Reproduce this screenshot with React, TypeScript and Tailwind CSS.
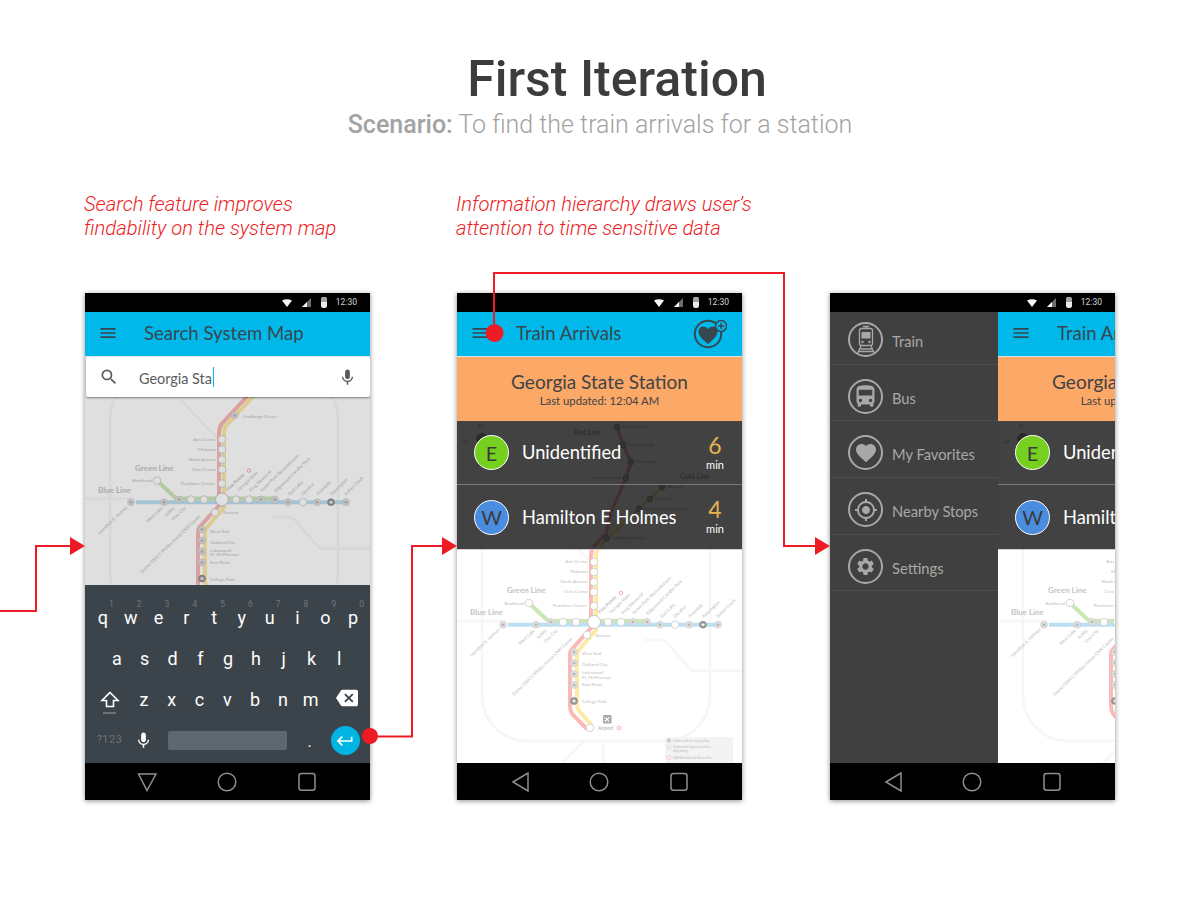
import type { ReactNode } from 'react';
import { MdBackspace, MdDirectionsBus, MdFavorite, MdKeyboardReturn, MdLocalAirport, MdMenu, MdMic, MdMyLocation, MdSearch, MdSettings } from 'react-icons/md';

const keyRow1 = [['q', '1'], ['w', '2'], ['e', '3'], ['r', '4'], ['t', '5'], ['y', '6'], ['u', '7'], ['i', '8'], ['o', '9'], ['p', '0']];
const keyRow2 = ['a', 's', 'd', 'f', 'g', 'h', 'j', 'k', 'l'];
const keyRow3 = ['z', 'x', 'c', 'v', 'b', 'n', 'm'];

function TrainIcon() {
  return (
    <svg width="20" height="30" viewBox="0 0 20 30" fill="none" stroke="currentColor" strokeWidth="1.300">
      <path d="M7 1.500H13M10 1.500V3.500" />
      <rect x="3.500" y="3.500" width="13" height="17" rx="2" />
      <rect x="5.500" y="7" width="9" height="6.500" fill="currentColor" stroke="none" />
      <circle cx="6.500" cy="17" r="1.200" fill="currentColor" stroke="none" />
      <circle cx="13.500" cy="17" r="1.200" fill="currentColor" stroke="none" />
      <path d="M5 21L1.500 28.500M15 21L18.500 28.500M3.500 24H16.500M2.500 26.500H17.500" />
    </svg>
  );
}

const drawerItems = [
  { label: 'Train', icon: <TrainIcon />, row: 'h-[53px] pt-[10px]' },
  { label: 'Bus', icon: <MdDirectionsBus size={27} />, row: 'h-[56px] pt-[14px]' },
  { label: 'My Favorites', icon: <MdFavorite size={24} />, row: 'h-[57px] pt-[14px]' },
  { label: 'Nearby Stops', icon: <MdMyLocation size={24} />, row: 'h-[57px] pt-[14px]' },
  { label: 'Settings', icon: <MdSettings size={21} />, row: 'h-[56px] pt-[14px]' },
];

// map coordinates are relative to Five Points
const stations: { x: number; y: number; parking?: boolean; dark?: boolean }[] = [
  { x: -91, y: 2.7, parking: true }, { x: -58, y: 2.7, parking: true }, { x: -43, y: 0, parking: true }, { x: -31, y: 0 }, { x: -18, y: 0 },
  { x: 14, y: 0 }, { x: 27, y: 0 }, { x: 39, y: 0, parking: true }, { x: 53, y: 0, parking: true }, { x: 66, y: 2.7, parking: true },
  { x: 81, y: 2.7 }, { x: 95, y: 2.7, parking: true }, { x: 109, y: 2.7, parking: true, dark: true }, { x: 124, y: 2.7, parking: true },
  { x: -65, y: -19 }, { x: 0, y: -16 }, { x: 0, y: -30 }, { x: 0, y: -40 }, { x: 0, y: -50 }, { x: 0, y: -60 }, { x: 12.7, y: -84, parking: true },
  { x: -7, y: 13 }, { x: -20, y: 30, parking: true }, { x: -20, y: 41, parking: true }, { x: -20, y: 52, parking: true }, { x: -20, y: 63, parking: true },
  { x: -20, y: 79, parking: true, dark: true }, { x: -4, y: 106 },
];

const sideLabels = [
  { text: 'Arts Center', x: -6, y: -59, end: true }, { text: 'Midtown', x: -6, y: -49, end: true }, { text: 'North Avenue', x: -6, y: -39, end: true },
  { text: 'Civic Center', x: -6, y: -29, end: true }, { text: 'Peachtree Center', x: -7, y: -15, end: true }, { text: 'Bankhead', x: -70, y: -17.500, end: true },
  { text: 'Lindbergh Center', x: 21, y: -82 }, { text: 'Garnett', x: 1, y: 14.500 }, { text: 'West End', x: -12, y: 33 }, { text: 'Oakland City', x: -12, y: 44 },
  { text: 'Lakewood/', x: -12, y: 52 }, { text: 'Ft. McPherson', x: -12, y: 56.500 }, { text: 'East Point', x: -12, y: 64 }, { text: 'College Park', x: -12, y: 81 },
];

const slantLabels = [
  { text: 'Hamilton E. Holmes', x: -94, y: 8, end: true }, { text: 'West Lake', x: -59, y: 9, end: true }, { text: 'Ashby', x: -47, y: 9, end: true }, { text: 'Vine City', x: -36, y: 9, end: true },
  { text: 'Dome/GWCC/Philips Arena/CNN Center', x: -21, y: 17, end: true },
  { text: 'Georgia State', x: 17, y: -8 }, { text: 'King Memorial', x: 29, y: -7.500 }, { text: 'Inman Park/Reynoldstown', x: 40, y: -7.500 }, { text: 'Edgewood/Candler Park', x: 54, y: -7 },
  { text: 'East Lake', x: 68, y: -4 }, { text: 'Decatur', x: 81, y: -4 }, { text: 'Avondale', x: 96, y: -4 }, { text: 'Kensington', x: 110, y: -4 }, { text: 'Indian Creek', x: 124, y: -4 },
];

const northStations = [[12.7, -84], [45, -113], [56, -123], [68, -135], [32, -144], [37, -160], [29, -177], [23, -195]];
const northLabels = [
  { text: 'North Springs', x: 28, y: -194 }, { text: 'Sandy Springs', x: 34, y: -176 }, { text: 'Dunwoody', x: 42, y: -159 }, { text: 'Medical Center', x: 27, y: -143, end: true },
  { text: 'Doraville', x: 73, y: -134 }, { text: 'Chamblee', x: 61, y: -122 }, { text: 'Brookhaven/Oglethorpe', x: 50, y: -112 }, { text: 'Lindbergh Center', x: 18, y: -83 },
];

function MetroMap({ viewBox, north }: { viewBox: string; north?: boolean }) {
  return (
    <svg viewBox={viewBox} className="absolute inset-0 h-full w-full font-['Lato',sans-serif]">
      <g fill="none" stroke="#f6f6f6" strokeWidth="2.500">
        <rect x="-112" y="-125" width="228" height="244" rx="45" />
        <path d="M-137 -1H-88M50 18H66Q72 18 76 24L95 46Q98 49 102 49H148M-32 141L-10 119M9 119V141M-42 -100L-5 -62" />
      </g>
      <g fill="none" strokeWidth="4">
        <path d="M-86 2.700H124" stroke="#bcdff3" />
        <path d="M-65 -19L-48 -3Q-46 -1 -43 -1H53" stroke="#cde6b6" />
        <path d="M25 -103L0 -76Q-3 -72 -3 -66V6L-22 27Q-24 29 -24 33V84Q-24 90 -20 94L-7 107" stroke="#fbb9b5" />
        <path d="M32 -104L6 -76Q2 -72 2 -66V8L-15 28Q-17 30 -17 34V82Q-17 87 -13 91L-2 104" stroke="#fdeaa4" />
      </g>
      {stations.map((s) => (
        <g key={`${s.x}:${s.y}`}>
          <circle cx={s.x} cy={s.y} r={s.parking ? 3.400 : 3.800} fill={s.dark ? '#9a9a9a' : s.parking ? '#e4e4e4' : '#ffffff'} stroke={s.dark ? '#8a8a8a' : '#cccccc'} strokeWidth="0.800" />
          {s.parking && <rect x={s.x - 1.500} y={s.y - 1.200} width="3" height="2.400" rx="0.600" fill={s.dark ? '#eeeeee' : '#b8b8b8'} />}
        </g>
      ))}
      <circle cx="0" cy="0" r="6.500" fill="#ffffff" stroke="#c4c4c4" strokeWidth="1" />
      <circle cx="27" cy="-29" r="1.800" fill="#ffffff" stroke="#f4a5a5" strokeWidth="0.900" />
      <circle cx="25" cy="106" r="1.800" fill="#ffffff" stroke="#f4a5a5" strokeWidth="0.900" />
      <g fill="#bcbcbc" fontSize="4.500">
        {sideLabels.map((l) => (
          <text key={l.text} x={l.x} y={l.y} textAnchor={l.end ? 'end' : 'start'}>{l.text}</text>
        ))}
        {slantLabels.map((l) => (
          <text key={l.text} x={l.x} y={l.y} textAnchor={l.end ? 'end' : 'start'} transform={`rotate(-44 ${l.x} ${l.y})`}>{l.text}</text>
        ))}
        <text x="6" y="-8" fontWeight="700" fontSize="4.800" transform="rotate(-44 6 -8)">Five Points</text>
        <text x="4" y="107.500" fontWeight="700" fontSize="4.800">Airport</text>
        <text x="-87" y="-29" fontWeight="700" fontSize="8" fill="#c4c4c4">Green Line</text>
        <text x="-124" y="-7" fontWeight="700" fontSize="8" fill="#c4c4c4">Blue Line</text>
      </g>
      <rect x="9" y="93" width="8.500" height="8.500" rx="1" fill="#a8a8a8" />
      <g transform="rotate(45 13.250 97.250)">
        <MdLocalAirport x={9.250} y={93.250} size={8} color="#ffffff" />
      </g>
      <g>
        <rect x="71" y="115" width="68" height="26" fill="#f3f3f3" />
        <circle cx="75" cy="118.500" r="1.800" fill="#cfcfcf" stroke="#b5b5b5" strokeWidth="0.400" />
        <circle cx="75" cy="125.500" r="1.600" fill="#ffffff" stroke="#b5b5b5" strokeWidth="0.500" />
        <circle cx="75" cy="135.500" r="1.800" fill="#ffffff" stroke="#f4a5a5" strokeWidth="0.700" />
        <g fill="#b9b9b9" fontSize="2.700">
          <text x="79" y="119.500">Stations with free daily parking</text>
          <text x="79" y="125.500">Stations with long-term and free</text>
          <text x="79" y="129.500">daily parking</text>
          <text x="79" y="136.500">MARTA Buckhead &amp; Breeze Pass</text>
        </g>
      </g>
      {north && (
        <g>
          <path d="M0 -76L12 -88L17 -110L32 -144L37 -160L29 -177L23 -195" fill="none" stroke="#e62a2a" strokeWidth="3" />
          <path d="M6 -76L68 -135" fill="none" stroke="#d9c200" strokeWidth="2.500" />
          {northStations.map(([x, y]) => (
            <circle key={`${x}:${y}`} cx={x} cy={y} r="3" fill="#555555" stroke="#111111" strokeWidth="0.800" />
          ))}
          <g fill="#222222" fontSize="4.200">
            {northLabels.map((l) => (
              <text key={l.text} x={l.x} y={l.y} textAnchor={l.end ? 'end' : 'start'}>{l.text}</text>
            ))}
            <text x="-20" y="-187" fontWeight="700" fontSize="7">Red Line</text>
            <text x="86" y="-143" fontWeight="700" fontSize="7">Gold Line</text>
            <text x="-116" y="-194" fontSize="6">N</text>
            <text x="-132" y="-178" fontSize="6">W</text>
          </g>
          <circle cx="-112" cy="-183" r="6" fill="#111111" />
        </g>
      )}
    </svg>
  );
}

function StatusBar() {
  return (
    <div className="flex h-[19px] items-center justify-end bg-black pr-[13px]">
      <svg width="10" height="8" viewBox="0 0 10 8"><path d="M0 1.500Q5 -1 10 1.500L5 8Z" fill="#f7f7f7" /></svg>
      <svg width="9" height="9" viewBox="0 0 9 9" className="ml-[10px]"><path d="M0 9L9 0V9Z" fill="#6d6d6d" /><path d="M0 9L5 4V9Z" fill="#f7f7f7" /></svg>
      <svg width="6" height="11" viewBox="0 0 6 11" className="ml-[10px]"><rect width="6" height="11" rx="2.500" fill="#ececec" /><path d="M0 5V2.500Q0 0 3 0Q6 0 6 2.500V5Z" fill="#a0a0a0" /></svg>
      <span className="ml-[9px] font-['Roboto',sans-serif] text-[8.500px] leading-none text-[#d6d6d6]">12:30</span>
    </div>
  );
}

function NavBar({ down }: { down?: boolean }) {
  return (
    <div className="flex h-[37px] items-center gap-[60px] bg-black pl-[52px]">
      <svg width="20" height="20" viewBox="0 0 20 20" fill="none" stroke="#8f8f8f" strokeWidth="1.500" className={down ? '' : 'ml-[2px] -mr-[2px]'}>
        {down ? <path d="M1.500 2H19L10 18.500Z" /> : <path d="M2 10L17 1V19Z" />}
      </svg>
      <svg width="20" height="20" viewBox="0 0 20 20" fill="none" stroke="#8f8f8f" strokeWidth="1.500"><circle cx="10" cy="10" r="8.800" /></svg>
      <svg width="20" height="20" viewBox="0 0 20 20" fill="none" stroke="#8f8f8f" strokeWidth="1.500"><rect x="2" y="1.600" width="16" height="16.600" rx="2.500" /></svg>
    </div>
  );
}

function Phone({ children, down }: { children: ReactNode; down?: boolean }) {
  return (
    <div className="flex h-[507px] w-[285px] shrink-0 flex-col overflow-hidden bg-white font-['Lato',sans-serif] shadow-[0_1px_5px_rgba(0,0,0,0.45)]">
      <StatusBar />
      <div className="h-[451px] overflow-hidden">{children}</div>
      <NavBar down={down} />
    </div>
  );
}

function AppBar({ title, action }: { title: string; action?: ReactNode }) {
  return (
    <div className="relative flex h-[45px] items-center border-b border-[#d8e8ee] bg-[#00b9ea] pb-[2px] text-[#37474f]">
      <MdMenu size={20} className="ml-[13px]" />
      <span className="ml-[26px] text-[18.600px] leading-none">{title}</span>
      {action}
    </div>
  );
}

function FavoriteAdd() {
  return (
    <div className="absolute left-[236px] top-[5px] h-[34px] w-[34px]">
      <svg viewBox="0 0 34 34" className="h-full w-full">
        <circle cx="15" cy="17" r="13.200" fill="none" stroke="#37474f" strokeWidth="2" />
        <path d="M15 27C9 22 5.500 18.500 5.500 14.500C5.500 11.500 7.800 9.500 10.300 9.500C12.300 9.500 14 10.500 15 12.200C16 10.500 17.700 9.500 19.700 9.500C22.200 9.500 24.500 11.500 24.500 14.500C24.500 18.500 21 22 15 27Z" fill="#37474f" />
        <circle cx="28" cy="9" r="5.500" fill="#00b9ea" stroke="#37474f" strokeWidth="1.500" />
        <path d="M28 6V12M25 9H31" stroke="#37474f" strokeWidth="1.500" />
      </svg>
    </div>
  );
}

function ArrivalRow({ badge, badgeColor, name, minutes, divider }: { badge: string; badgeColor: string; name: string; minutes: string; divider?: boolean }) {
  return (
    <div className={`flex h-[64px] items-center bg-[#2d2d2d]/90 pl-[17px] ${divider ? 'border-b border-[#7a7a7a]' : ''}`}>
      <div className={`flex h-[35px] w-[35px] shrink-0 items-center justify-center rounded-full border border-white text-[20px] text-[#3a3a3a] ${badgeColor}`}>{badge}</div>
      <span className="ml-[13px] flex-1 text-[18.300px] leading-none text-white">{name}</span>
      <div className="mr-[7px] flex w-[40px] flex-col items-center pb-[2px]">
        <span className="text-[23px] leading-[26px] text-[#e6b450]">{minutes}</span>
        <span className="text-[11px] leading-[14px] text-white">min</span>
      </div>
    </div>
  );
}

function Arrivals() {
  return (
    <div className="relative h-[451px] w-[285px] shrink-0 bg-white">
      <MetroMap viewBox="-137 -310 285 451" north />
      <div className="relative">
        <AppBar title="Train Arrivals" action={<FavoriteAdd />} />
        <div className="flex h-[64px] flex-col items-center justify-center bg-[#fca866] text-[#3f4347]">
          <span className="text-[19px] leading-[24px]">Georgia State Station</span>
          <span className="text-[11.300px] leading-[14px]">Last updated: 12:04 AM</span>
        </div>
        <ArrivalRow badge="E" badgeColor="bg-[#76d01f]" name="Unidentified" minutes="6" divider />
        <ArrivalRow badge="W" badgeColor="bg-[#4a8ddf]" name="Hamilton E Holmes" minutes="4" />
        <div className="h-px bg-[#cfcfcf]" />
      </div>
    </div>
  );
}

function Key({ label, hint }: { label: string; hint?: string }) {
  return (
    <div className="relative flex h-full w-[27.800px] shrink-0 items-center justify-center text-[18px] text-white">
      {label}
      {hint && <span className="absolute right-[3px] top-[3px] text-[8.500px] leading-none text-[#6f777e]">{hint}</span>}
    </div>
  );
}

function Keyboard() {
  return (
    <div className="h-[178px] bg-[#3c444b] pt-[12px] font-['Roboto',sans-serif]">
      <div className="flex h-[41px] px-[4px]">
        {keyRow1.map(([k, n]) => <Key key={k} label={k} hint={n} />)}
      </div>
      <div className="flex h-[41px] px-[18px]">
        {keyRow2.map((k) => <Key key={k} label={k} />)}
      </div>
      <div className="flex h-[41px] px-[4px]">
        <div className="flex w-[41px] shrink-0 flex-col items-center justify-center pt-[6px]">
          <svg width="20" height="17" viewBox="0 0 20 17" fill="none" stroke="#ffffff" strokeWidth="1.600"><path d="M10 1.500L18 9.500H13.500V15.500H6.500V9.500H2Z" /></svg>
          <div className="mt-[4px] h-[1.500px] w-[13px] bg-[#6b7379]" />
        </div>
        {keyRow3.map((k) => <Key key={k} label={k} />)}
        <div className="flex flex-1 items-center justify-center pb-[3px] pl-[3px] text-white"><MdBackspace size={22} /></div>
      </div>
      <div className="flex h-[41px] items-center px-[4px]">
        <span className="flex w-[41px] shrink-0 justify-center text-[11px] tracking-[0.5px] text-[#6b7379]">?123</span>
        <div className="flex w-[27.800px] shrink-0 justify-center text-white"><MdMic size={19} /></div>
        <div className="ml-[10px] h-[19px] w-[119px] rounded-[2px] bg-[#5f676e]" />
        <div className="ml-[9px] flex w-[27.800px] shrink-0 justify-center pt-[3px] text-[16px] text-white">.</div>
        <div className="ml-[7px] flex h-[29px] w-[29px] shrink-0 items-center justify-center rounded-full bg-[#00b4e4] text-white"><MdKeyboardReturn size={20} /></div>
      </div>
    </div>
  );
}

function SearchScreen() {
  return (
    <div>
      <AppBar title="Search System Map" />
      <div className="relative h-[228px] overflow-hidden bg-white">
        <MetroMap viewBox="-137 -142.500 285 228" />
        <div className="absolute inset-0 bg-black/[0.125]" />
        <div className="absolute left-px right-0 top-0 flex h-[40px] items-center rounded-[2px] bg-white text-[#5b5b5b] shadow-[0_1px_2px_rgba(0,0,0,0.45)]">
          <MdSearch size={20} className="ml-[13px]" />
          <span className="ml-[20px] pt-[3px] text-[14.400px]">Georgia Sta</span>
          <div className="ml-px h-[20px] w-px bg-[#00b9ea]" />
          <MdMic size={19} className="ml-auto mr-[13px]" />
        </div>
      </div>
      <Keyboard />
    </div>
  );
}

function Drawer() {
  return (
    <div className="h-full w-[168px] shrink-0 bg-[#404040] text-[#a8a8a8]">
      {drawerItems.map((item) => (
        <div key={item.label} className={`flex items-start border-b border-[#4c4c4c] pl-[18px] ${item.row}`}>
          <div className="flex items-center">
            <div className="flex h-[35px] w-[35px] items-center justify-center rounded-full border-2 border-[#a8a8a8]">{item.icon}</div>
            <span className="ml-[9px] pt-[3px] text-[14.700px] leading-none">{item.label}</span>
          </div>
        </div>
      ))}
    </div>
  );
}

function Connectors() {
  return (
    <svg width="1200" height="900" className="pointer-events-none absolute left-0 top-0" fill="none" stroke="#ed1c24" strokeWidth="2">
      <path d="M0 611H36V546H72" />
      <path d="M370 736.500H412V546H444" />
      <path d="M494 333V273H784V546H817" />
      <g fill="#ed1c24" stroke="none">
        <path d="M70 537L85 546L70 555Z" />
        <path d="M442 537L457 546L442 555Z" />
        <path d="M815 537L830 546L815 555Z" />
        <circle cx="370" cy="736" r="8" />
        <circle cx="494.500" cy="333" r="9" />
      </g>
    </svg>
  );
}

export default function App() {
  return (
    <div className="relative h-[900px] w-[1200px] overflow-hidden bg-white font-['Roboto',sans-serif]">
      <header className="flex flex-col items-center pt-[52px]">
        <h1 className="pl-[34px] text-[50px] font-medium leading-[54px] text-[#3c3c3c]">First Iteration</h1>
        <p className="text-[25px] font-light leading-[38px] text-[#a3a3a3]">
          <span className="font-medium">Scenario:</span> To find the train arrivals for a station
        </p>
      </header>
      <main className="mt-[48px] flex items-end gap-[87px] pl-[85px]">
        <section className="w-[285px]">
          <p className="mb-[53px] -ml-px whitespace-nowrap text-[20.200px] font-light italic leading-[24px] text-[#ed1c24]">Search feature improves<br />findability on the system map</p>
          <Phone down><SearchScreen /></Phone>
        </section>
        <section className="w-[285px]">
          <p className="mb-[53px] -ml-px whitespace-nowrap text-[20.200px] font-light italic leading-[24px] text-[#ed1c24]">Information hierarchy draws user’s<br />attention to time sensitive data</p>
          <Phone><Arrivals /></Phone>
        </section>
        <section className="ml-px w-[285px]">
          <Phone>
            <div className="flex h-full">
              <Drawer />
              <Arrivals />
            </div>
          </Phone>
        </section>
      </main>
      <Connectors />
    </div>
  );
}
